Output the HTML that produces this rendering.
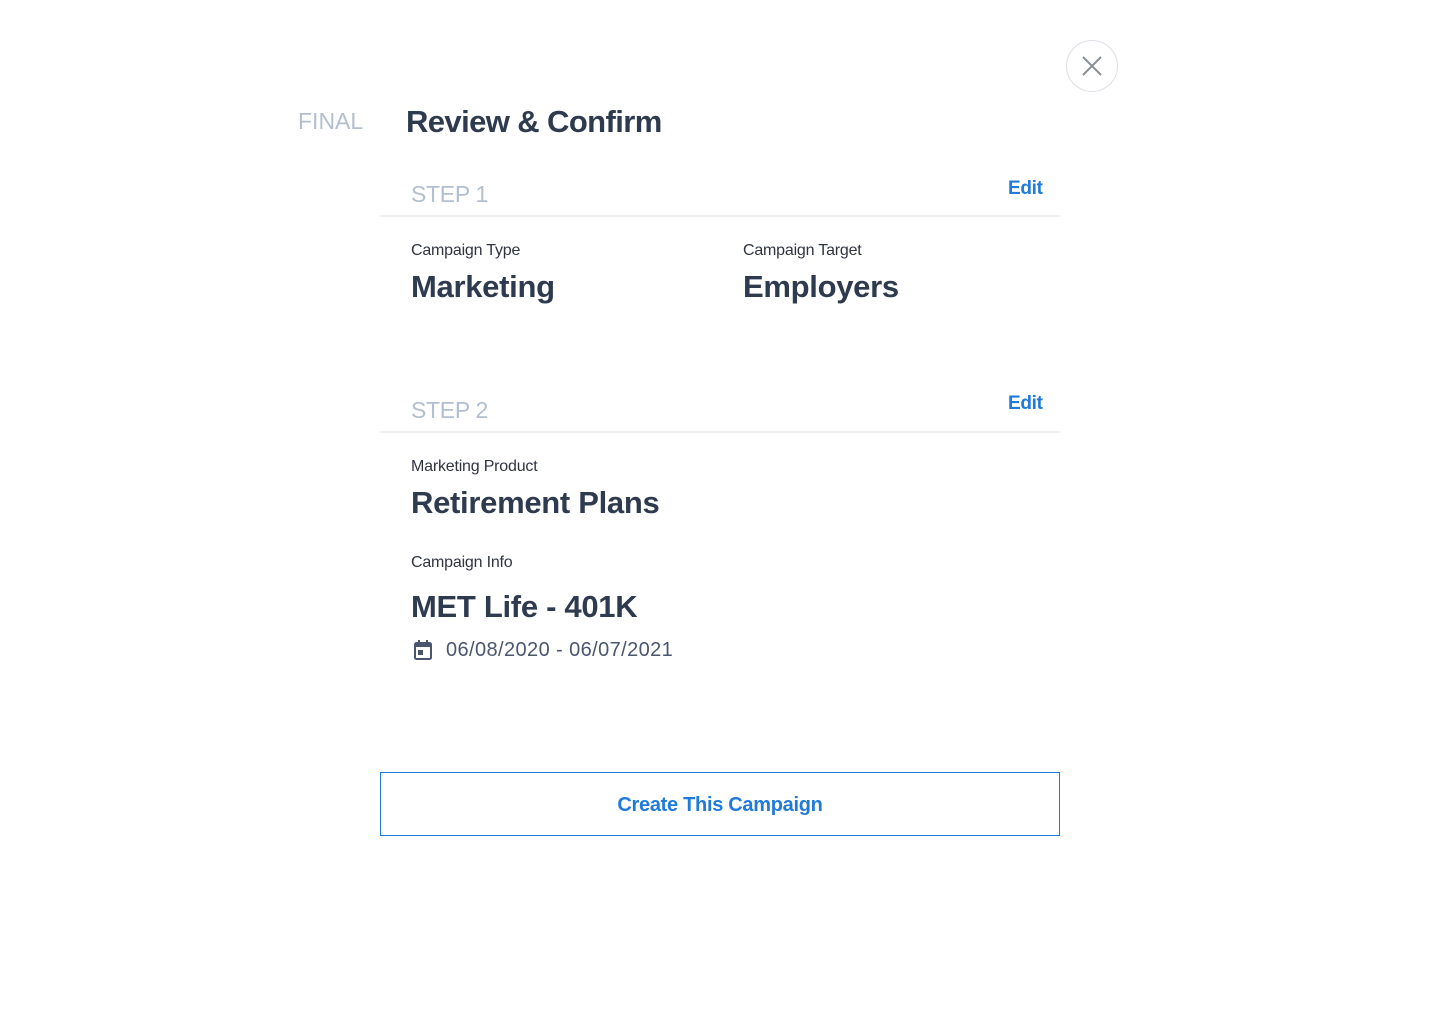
<!DOCTYPE html>
<html><head><meta charset="utf-8"><style>
body{margin:0;width:1440px;height:1024px;background:#fff;font-family:"Liberation Sans",Arial,sans-serif;position:relative;overflow:hidden}
.a{position:absolute;white-space:nowrap;line-height:1}
.close{position:absolute;left:1066px;top:40px;width:50px;height:50px;border:1.5px solid #dcdfe4;border-radius:50%}
.step{color:#b3bfd0;font-size:23px;letter-spacing:-0.3px}
.edit{color:#1f7ad9;font-size:19px;font-weight:bold;letter-spacing:-0.3px}
.hr{position:absolute;left:380px;width:680px;height:2px;background:#eef0f2}
.lbl{color:#2f3440;font-size:16px;letter-spacing:-0.2px}
.val{color:#2e3a4e;font-size:31px;font-weight:bold;letter-spacing:-0.3px}
.btn{position:absolute;left:380px;top:772px;width:678px;height:62px;border:1px solid #1f7ad9;color:#1f7ad9;font-size:20px;font-weight:bold;text-align:center;line-height:64px;letter-spacing:-0.3px}
</style></head><body>
<div class="close"><svg width="50" height="50" viewBox="0 0 50 50"><path d="M16 16L34 34M34 16L16 34" stroke="#8a8f98" stroke-width="2" fill="none"/></svg></div>
<div class="a" style="left:298px;top:110px;color:#b3bfd0;font-size:23px;letter-spacing:0px">FINAL</div>
<div class="a" style="left:406px;top:106px;color:#2e3a4e;font-size:31px;font-weight:bold;letter-spacing:-0.6px">Review &amp; Confirm</div>

<div class="a step" style="left:411px;top:183px">STEP 1</div>
<div class="a edit" style="left:1008px;top:179px">Edit</div>
<div class="hr" style="top:215px"></div>
<div class="a lbl" style="left:411px;top:243px">Campaign Type</div>
<div class="a lbl" style="left:743px;top:243px">Campaign Target</div>
<div class="a val" style="left:411px;top:271px">Marketing</div>
<div class="a val" style="left:743px;top:271px">Employers</div>

<div class="a step" style="left:411px;top:399px">STEP 2</div>
<div class="a edit" style="left:1008px;top:394px">Edit</div>
<div class="hr" style="top:431px"></div>
<div class="a lbl" style="left:411px;top:459px">Marketing Product</div>
<div class="a val" style="left:411px;top:487px">Retirement Plans</div>
<div class="a lbl" style="left:411px;top:555px">Campaign Info</div>
<div class="a val" style="left:411px;top:591px">MET Life - 401K</div>
<svg class="a" style="left:413px;top:639px" width="20" height="22" viewBox="0 0 20 22"><rect x="2" y="4" width="16" height="16" rx="1.5" fill="none" stroke="#4a5670" stroke-width="2"/><rect x="2" y="4" width="16" height="4" fill="#4a5670"/><rect x="5" y="1" width="2" height="4" fill="#4a5670"/><rect x="13" y="1" width="2" height="4" fill="#4a5670"/><rect x="5" y="11" width="5" height="5" fill="#4a5670"/></svg>
<div class="a" style="left:446px;top:640px;color:#4a5670;font-size:20px;letter-spacing:0.4px">06/08/2020 - 06/07/2021</div>

<div class="btn">Create This Campaign</div>
</body></html>
